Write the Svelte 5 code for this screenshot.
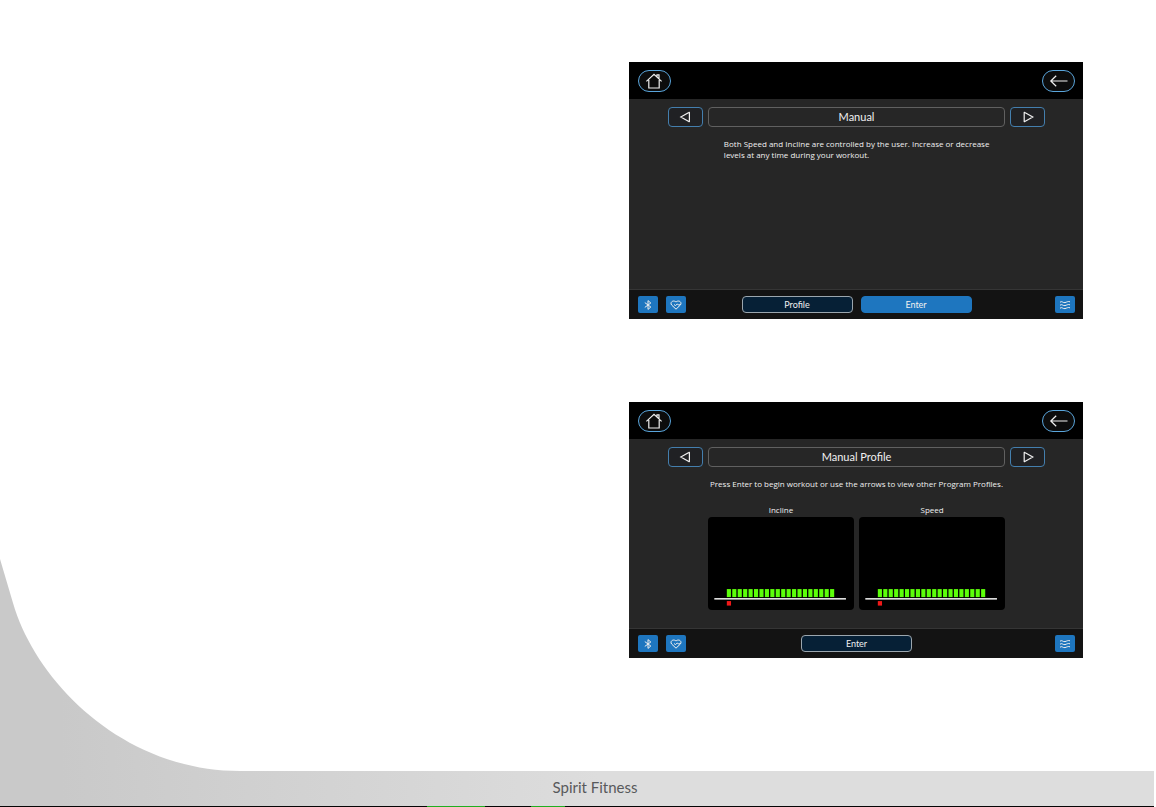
<script>
  const screens = [
    {
      title: 'Manual',
      text: 'Both Speed and Incline are controlled by the user. Increase or decrease levels at any time during your workout.',
      charts: [],
      actions: [{ label: 'Profile', primary: false }, { label: 'Enter', primary: true }]
    },
    {
      title: 'Manual Profile',
      text: 'Press Enter to begin workout or use the arrows to view other Program Profiles.',
      charts: ['Incline', 'Speed'],
      actions: [{ label: 'Enter', primary: false }]
    }
  ];
  const bars = Array.from({ length: 20 }, (_, i) => 18.8 + i * 5.43);
</script>

<div class="page">
  <main>
    {#each screens as screen}
      <section class="screen" aria-label={screen.title}>
        <header>
          <button class="pill" aria-label="Home">
            <svg width="18" height="16" viewBox="0 0 18 16"><path d="M1.4 8.4 9 1.4l7.6 7M3.8 7v8h10.4V7M12 4V1.8h2v4" /></svg>
          </button>
          <button class="pill" aria-label="Back">
            <svg width="20" height="14" viewBox="0 0 20 14"><path d="M18.5 7H1.8M7.2 1.8 1.8 7l5.4 5.2" /></svg>
          </button>
        </header>

        <div class="body">
          <nav>
            <button class="arrow" aria-label="Previous program">
              <svg width="12" height="12" viewBox="0 0 12 12"><path d="M10.4 1.6v8.8Q10.4 11 9.8 10.6L1.8 6 9.8 1.4Q10.4 1 10.4 1.6z" /></svg>
            </button>
            <h2>{screen.title}</h2>
            <button class="arrow" aria-label="Next program">
              <svg width="12" height="12" viewBox="0 0 12 12"><path d="M2.2 1.6v8.8Q2.2 11 2.8 10.6L10.8 6 2.8 1.4Q2.2 1 2.2 1.6z" /></svg>
            </button>
          </nav>
          <p class:centered={screen.charts.length > 0}>{screen.text}</p>
          {#if screen.charts.length}
            <div class="charts">
              {#each screen.charts as name}
                <figure>
                  <figcaption>{name}</figcaption>
                  <svg viewBox="0 0 146 93" role="img" aria-label={name}>
                    {#each bars as x}
                      <rect {x} y="72" width="4.1" height="8" fill="#5cff0a" />
                    {/each}
                    <rect x="6.3" y="81" width="131.5" height="1.5" fill="#f2f2f2" />
                    <rect x="18.8" y="84" width="4.2" height="4.5" fill="#f01818" />
                  </svg>
                </figure>
              {/each}
            </div>
          {/if}
        </div>

        <div class="toolbar">
          <div class="tools">
            <button class="tool" aria-label="Bluetooth">
              <svg width="10" height="12" viewBox="0 0 10 12"><path d="M1.8 3.6 7.8 8 5 10.4V1.6L7.8 4 1.8 8.4" /></svg>
            </button>
            <button class="tool" aria-label="Heart rate">
              <svg width="12" height="10" viewBox="0 0 12 10"><path d="M6 9.2 1.6 5C-.4 2.6 3 -.6 6 2c3-2.6 6.4.6 4.4 3L6 9.2M4 4.6l1.6 1 1.6-1.6 1 .8h2" /></svg>
            </button>
          </div>
          <div class="actions">
            {#each screen.actions as action}
              <button class="action" class:primary={action.primary}>{action.label}</button>
            {/each}
          </div>
          <div class="tools end">
            <button class="tool" aria-label="Fan">
              <svg width="12" height="10" viewBox="0 0 12 10"><path d="M1 2.2c2-1.6 3 .9 5 .4S9 1 11 1.8M1 5.2c2-1.6 3 .9 5 .4s3-1.6 5-.8M1 8.2c2-1.6 3 .9 5 .4S9 7 11 7.8" /></svg>
            </button>
          </div>
        </div>
      </section>
    {/each}
  </main>

  <footer>
    <svg class="swoosh" width="240" height="212" viewBox="0 0 240 212" aria-hidden="true">
      <defs>
        <linearGradient id="shade" gradientUnits="userSpaceOnUse" x1="60" y1="0" x2="240" y2="0">
          <stop offset="0" stop-color="#c9c9c9" />
          <stop offset="1" stop-color="#d0d0d0" />
        </linearGradient>
      </defs>
      <path d="M0 0 13 44C36 123 123 212 240 212H0z" fill="url(#shade)" />
    </svg>
    <span>Spirit Fitness</span>
  </footer>
  <div class="edge"></div>
</div>

<style>
  :global(body) {
    margin: 0;
    background: #fff;
  }
  .page {
    min-height: 100vh;
    display: flex;
    flex-direction: column;
    overflow-x: hidden;
    font-family: Lato, 'Liberation Sans', sans-serif;
  }
  main {
    flex: 1;
    display: grid;
    grid-template-columns: minmax(0, 1fr);
    align-content: start;
    row-gap: 83px;
    padding: 62px 6.3% 40px 54.4%;
  }
  .screen {
    display: flex;
    flex-direction: column;
    min-height: 257px;
    background: #262626;
    color: #f0f0f0;
  }
  .screen:last-child {
    min-height: 256px;
  }
  button {
    display: flex;
    align-items: center;
    justify-content: center;
    box-sizing: border-box;
    margin: 0;
    padding: 0;
    font: inherit;
    color: inherit;
    cursor: pointer;
  }
  button svg {
    fill: none;
    stroke: #f0f0f0;
    stroke-width: 1.2;
  }
  header {
    display: flex;
    align-items: center;
    justify-content: space-between;
    height: 37px;
    padding: 0 8px 0 9px;
    background: #000;
  }
  .pill {
    width: 33px;
    height: 22px;
    border: 1px solid #5aa5db;
    border-radius: 11px;
    background: #0c0c0c;
  }
  .body {
    flex: 1;
    padding: 8px 38px 16px 39px;
  }
  nav {
    display: flex;
    gap: 5px;
  }
  .arrow {
    width: 35px;
    height: 20px;
    border: 1px solid #447fae;
    border-radius: 4px;
    background: #202124;
  }
  h2 {
    flex: 1;
    box-sizing: border-box;
    height: 20px;
    margin: 0;
    border: 1px solid #606060;
    border-radius: 4px;
    font-size: 11px;
    font-weight: 400;
    line-height: 18px;
    text-align: center;
  }
  p,
  figcaption {
    font-family: 'Open Sans', 'Noto Sans', sans-serif;
    font-size: 8px;
    line-height: 11px;
  }
  p {
    margin: 11px 48px 0 56px;
  }
  p.centered {
    margin: 11px 0 0;
    text-align: center;
  }
  .charts {
    display: grid;
    grid-template-columns: 1fr 1fr;
    gap: 5px;
    margin: 15px 40px 0;
  }
  figure {
    margin: 0;
  }
  figcaption {
    margin-bottom: 2px;
    text-align: center;
  }
  figure svg {
    display: block;
    width: 100%;
    border-radius: 4px;
    background: #000;
  }
  .toolbar {
    display: grid;
    grid-template-columns: 1fr auto 1fr;
    align-items: center;
    box-sizing: border-box;
    height: 30px;
    padding: 0 8px 0 9px;
    border-top: 1px solid #353535;
    background: #131313;
  }
  .tools,
  .actions {
    display: flex;
    gap: 8px;
  }
  .end {
    justify-content: flex-end;
  }
  .tool {
    width: 20px;
    height: 17px;
    border: 0;
    border-radius: 2px;
    background: #1e76bf;
  }
  .tool svg {
    stroke-width: 1;
  }
  .action {
    width: 111px;
    height: 17px;
    border: 1px solid #9ba6ae;
    border-radius: 4px;
    background: #062036;
    font-size: 9px;
  }
  .primary {
    border-color: #1e76bf;
    background: #1e76bf;
  }
  footer {
    position: relative;
    display: flex;
    align-items: center;
    justify-content: center;
    box-sizing: border-box;
    height: 35px;
    margin-right: 2px;
    padding: 0 0 3px 36px;
    background: linear-gradient(90deg, #c9c9c9 60px, #dddddd 52%);
    color: #58595b;
    font-size: 15px;
  }
  .swoosh {
    position: absolute;
    left: 0;
    bottom: 100%;
  }
  .edge {
    height: 1px;
    margin-right: 2px;
    background: linear-gradient(
      90deg,
      #050505 37%,
      #1fae1f 37% 42%,
      #050505 42% 46%,
      #1fae1f 46% 49%,
      #050505 49%
    );
  }
</style>
